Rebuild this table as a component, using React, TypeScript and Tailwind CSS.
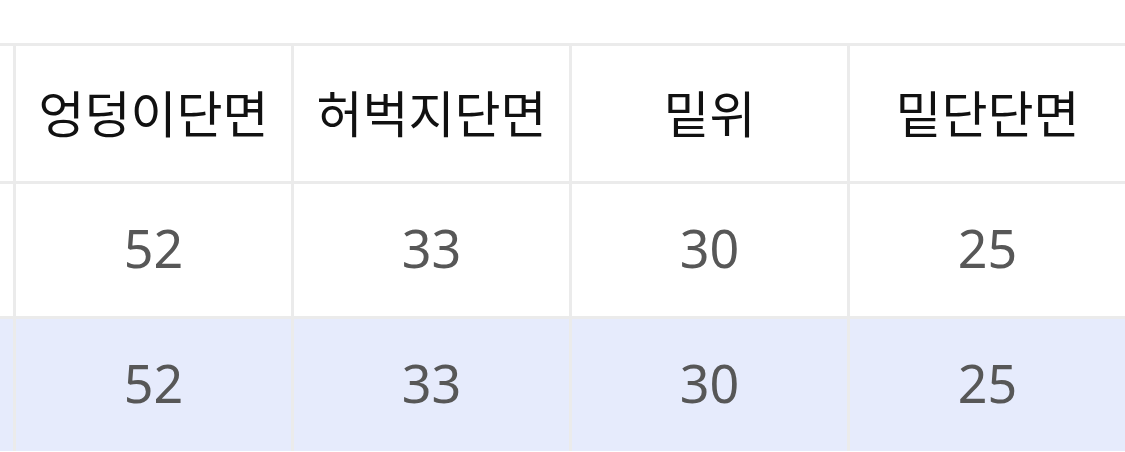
const headers = ["엉덩이단면", "허벅지단면", "밑위", "밑단단면"];
const rows = [
  { values: ["52", "33", "30", "25"], highlight: false },
  { values: ["52", "33", "30", "25"], highlight: true },
];

export default function App() {
  return (
    <div className="h-[452px] w-[1125px] overflow-hidden bg-white pt-[43px]">
      <div className="grid w-[1128px] grid-cols-[13px_275px_275px_275px_275px] grid-rows-[135px_132px_132px] gap-[3px] bg-[#ebebeb] pt-[3px]">
        <div className="bg-white" />
        {headers.map((h) => (
          <div
            key={h}
            className="flex items-center justify-center bg-white pb-[4px] text-[50px] font-normal text-[#111111] [font-family:'Noto_Sans_CJK_KR',sans-serif]"
          >
            {h}
          </div>
        ))}
        {rows.map((row, i) => (
          <Row key={i} values={row.values} highlight={row.highlight} />
        ))}
      </div>
    </div>
  );
}

function Row({ values, highlight }: { values: string[]; highlight: boolean }) {
  const cell = highlight ? "bg-[#e6ebfc]" : "bg-white";
  return (
    <>
      <div className={cell} />
      {values.map((v, i) => (
        <div
          key={i}
          className={`${cell} flex items-center justify-center pb-[4px] text-[52px] text-[#575757] [font-family:'Noto_Sans',sans-serif]`}
        >
          {v}
        </div>
      ))}
    </>
  );
}
